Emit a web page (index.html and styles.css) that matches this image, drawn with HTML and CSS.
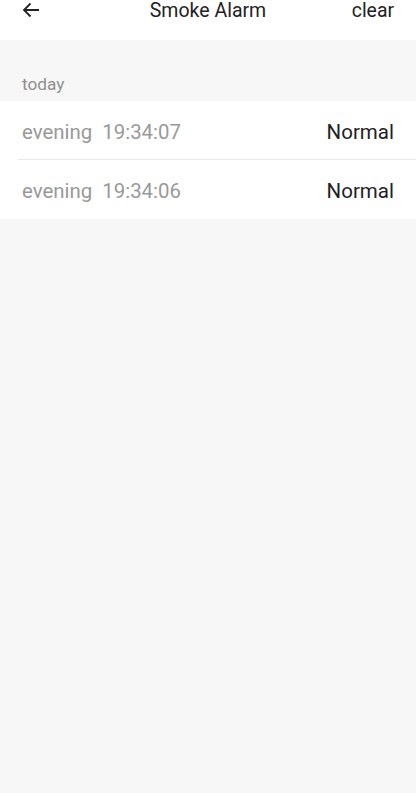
FILE: index.html
```html
<!DOCTYPE html>
<html>
<head>
<meta charset="utf-8">
<link rel="stylesheet" href="styles.css">
</head>
<body>
<div class="page">
  <header class="bar">
    <svg class="back" width="18" height="16" viewBox="0 0 18 16"><path d="M17 8H2M8.5 1.5L2 8l6.5 6.5" fill="none" stroke="#222" stroke-width="1.8"/></svg>
    <div class="title">Smoke Alarm</div>
    <div class="clear">clear</div>
  </header>
  <div class="section-label">today</div>
  <div class="list">
    <div class="row">
      <span class="time">evening&nbsp;&nbsp;19:34:07</span>
      <span class="status">Normal</span>
    </div>
    <div class="row">
      <span class="time">evening&nbsp;&nbsp;19:34:06</span>
      <span class="status">Normal</span>
    </div>
  </div>
</div>
</body>
</html>
```
FILE: styles.css
```css
html, body {
  margin: 0;
  padding: 0;
  background: #f7f7f7;
  font-family: Roboto, "Noto Sans", sans-serif;
}
.page {
  min-height: 793px;
  background: #f7f7f7;
}
.bar {
  height: 40px;
  background: #fff;
  display: flex;
  align-items: flex-start;
  position: relative;
}
.back {
  margin-left: 22px;
  margin-top: 2px;
}
.title {
  position: absolute;
  left: 0;
  right: 0;
  top: 0;
  text-align: center;
  font-size: 19.5px;
  line-height: 22px;
  color: #222;
}
.clear {
  margin-left: auto;
  margin-right: 22px;
  font-size: 19.4px;
  line-height: 22px;
  color: #222;
}
.section-label {
  height: 61px;
  box-sizing: border-box;
  padding: 33px 0 0 22px;
  font-size: 17.2px;
  line-height: 22px;
  color: #8f8f8f;
}
.list {
  background: #fff;
}
.row {
  height: 59px;
  box-sizing: border-box;
  padding: 2px 22px 0 22px;
  display: flex;
  align-items: center;
  justify-content: space-between;
  position: relative;
}
.row + .row::before {
  content: "";
  position: absolute;
  left: 18px;
  right: 0;
  top: -1px;
  height: 1px;
  background: #e8e8e8;
}
.time {
  font-size: 20.4px;
  color: #999;
}
.status {
  font-size: 20.5px;
  color: #222;
}
```
